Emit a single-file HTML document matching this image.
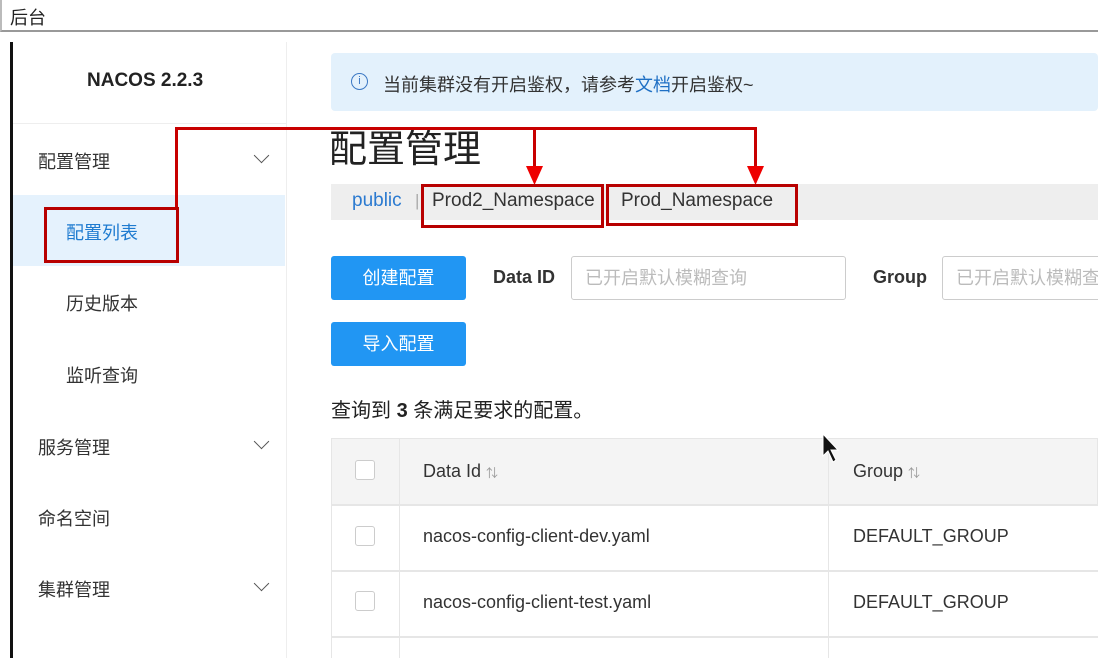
<!DOCTYPE html>
<html><head><meta charset="utf-8"><style>
*{margin:0;padding:0;box-sizing:border-box}
body{width:1098px;height:658px;overflow:hidden;background:#fff;font-family:"Liberation Sans","Noto Sans CJK SC",sans-serif;position:relative;color:#333}
.a{position:absolute}
.menu{position:absolute;left:38px;font-size:18px;color:#333}
.chev{position:absolute;left:256px;width:11px;height:11px;border-right:1.5px solid #555;border-bottom:1.5px solid #555;transform:rotate(45deg)}
.btn{position:absolute;left:331px;width:135px;height:44px;background:#2196f3;border-radius:3px;color:#fff;font-size:18px;text-align:center;line-height:44px}
.inp{position:absolute;height:44px;border:1px solid #ccc;border-radius:3px;font-size:18px;color:#bbb;line-height:42px;padding-left:13px;top:256px}
.cb{position:absolute;left:355px;width:20px;height:20px;border:1px solid #ccc;border-radius:3px;background:#fff}
.red{position:absolute;background:#c80000}
.rb{position:absolute;border:3px solid #b80000}
</style></head><body>
<div class="a" style="left:0;top:0;width:1098px;height:32px;border-bottom:2px solid #999;border-left:2px solid #bbb"></div>
<div class="a" style="left:10px;top:4px;font-size:18px;color:#222">后台</div>
<div class="a" style="left:10px;top:42px;width:3px;height:616px;background:#111"></div>
<div class="a" style="left:286px;top:42px;width:1px;height:616px;background:#eee"></div>
<div class="a" style="left:13px;top:123px;width:273px;height:1px;background:#eee"></div>
<div class="a" style="left:87px;top:70px;font-size:19px;font-weight:bold;color:#222">NACOS 2.2.3</div>
<div class="menu" style="top:148px">配置管理</div><div class="chev" style="top:150px"></div>
<div class="a" style="left:13px;top:195px;width:272px;height:71px;background:#e5f2fd"></div>
<div class="menu" style="left:66px;top:219px;color:#1e7bd0">配置列表</div>
<div class="menu" style="left:66px;top:290px">历史版本</div>
<div class="menu" style="left:66px;top:362px">监听查询</div>
<div class="menu" style="top:434px">服务管理</div><div class="chev" style="top:436px"></div>
<div class="menu" style="top:505px">命名空间</div>
<div class="menu" style="top:576px">集群管理</div><div class="chev" style="top:578px"></div>

<div class="a" style="left:331px;top:53px;width:767px;height:58px;background:#e3f1fc;border-radius:4px"></div>
<div class="a" style="left:351px;top:73px;width:17px;height:17px;border:1.5px solid #3b78c4;border-radius:50%;font-size:11px;color:#3b78c4;text-align:center;line-height:14px">i</div>
<div class="a" style="left:383px;top:71px;font-size:18px;color:#333">当前集群没有开启鉴权，请参考<span style="color:#1e6fc4">文档</span>开启鉴权~</div>
<div class="a" style="left:329px;top:128px;font-size:38px;color:#222;line-height:44px">配置管理</div>
<div class="a" style="left:331px;top:184px;width:767px;height:36px;background:#eee"></div>
<div class="a" style="left:352px;top:190px;font-size:19px;color:#2b7ad0">public</div>
<div class="a" style="left:415px;top:191px;font-size:17px;color:#aaa">|</div>
<div class="a" style="left:432px;top:190px;font-size:19px;color:#333">Prod2_Namespace</div>
<div class="a" style="left:621px;top:190px;font-size:19px;color:#333">Prod_Namespace</div>

<div class="btn" style="top:256px">创建配置</div>
<div class="a" style="left:493px;top:267px;font-size:18px;font-weight:bold;color:#333">Data ID</div>
<div class="inp" style="left:571px;width:275px">已开启默认模糊查询</div>
<div class="a" style="left:873px;top:267px;font-size:18px;font-weight:bold;color:#333">Group</div>
<div class="inp" style="left:942px;width:170px;white-space:nowrap;overflow:hidden">已开启默认模糊查询</div>
<div class="btn" style="top:322px">导入配置</div>
<div class="a" style="left:331px;top:394px;font-size:20px;color:#222">查询到 <b>3</b> 条满足要求的配置。</div>

<div class="a" style="left:331px;top:438px;width:767px;height:67px;background:#f4f4f4;border:1px solid #e6e6e6"></div>
<div class="a" style="left:331px;top:504px;width:767px;height:2px;background:#e6e6e6"></div>
<div class="a" style="left:331px;top:570px;width:767px;height:2px;background:#e6e6e6"></div>
<div class="a" style="left:331px;top:636px;width:767px;height:2px;background:#e6e6e6"></div>
<div class="a" style="left:331px;top:438px;width:1px;height:220px;background:#e6e6e6"></div>
<div class="a" style="left:399px;top:438px;width:1px;height:220px;background:#e6e6e6"></div>
<div class="a" style="left:828px;top:438px;width:1px;height:220px;background:#e6e6e6"></div>
<div class="cb" style="top:460px"></div><div class="cb" style="top:526px"></div><div class="cb" style="top:591px"></div>
<div class="a" style="left:423px;top:461px;font-size:18px;color:#333">Data Id <span style="font-size:12px;color:#999">⇅</span></div>
<div class="a" style="left:853px;top:461px;font-size:18px;color:#333">Group <span style="font-size:12px;color:#999">⇅</span></div>
<div class="a" style="left:423px;top:526px;font-size:18px;color:#333">nacos-config-client-dev.yaml</div>
<div class="a" style="left:853px;top:526px;font-size:18px;color:#333">DEFAULT_GROUP</div>
<div class="a" style="left:423px;top:592px;font-size:18px;color:#333">nacos-config-client-test.yaml</div>
<div class="a" style="left:853px;top:592px;font-size:18px;color:#333">DEFAULT_GROUP</div>

<svg class="a" style="left:820px;top:432px" width="24" height="36"><path d="M3 2 L3 24 L8 19 L13 30 L16 28 L11 18 L18 18 Z" fill="#111" stroke="#fff" stroke-width="1"/></svg>

<div class="red" style="left:175px;top:127px;width:582px;height:3px"></div>
<div class="red" style="left:175px;top:127px;width:3px;height:82px"></div>
<div class="rb" style="left:44px;top:207px;width:135px;height:56px"></div>
<div class="red" style="left:533px;top:127px;width:3px;height:42px"></div>
<svg class="a" style="left:526px;top:166px" width="18" height="20"><path d="M0 0 L17 0 L8.5 19 Z" fill="#e00"/></svg>
<div class="red" style="left:754px;top:127px;width:3px;height:42px"></div>
<svg class="a" style="left:747px;top:166px" width="18" height="20"><path d="M0 0 L17 0 L8.5 19 Z" fill="#e00"/></svg>
<div class="rb" style="left:421px;top:184px;width:183px;height:44px"></div>
<div class="rb" style="left:606px;top:184px;width:192px;height:42px"></div>
</body></html>
